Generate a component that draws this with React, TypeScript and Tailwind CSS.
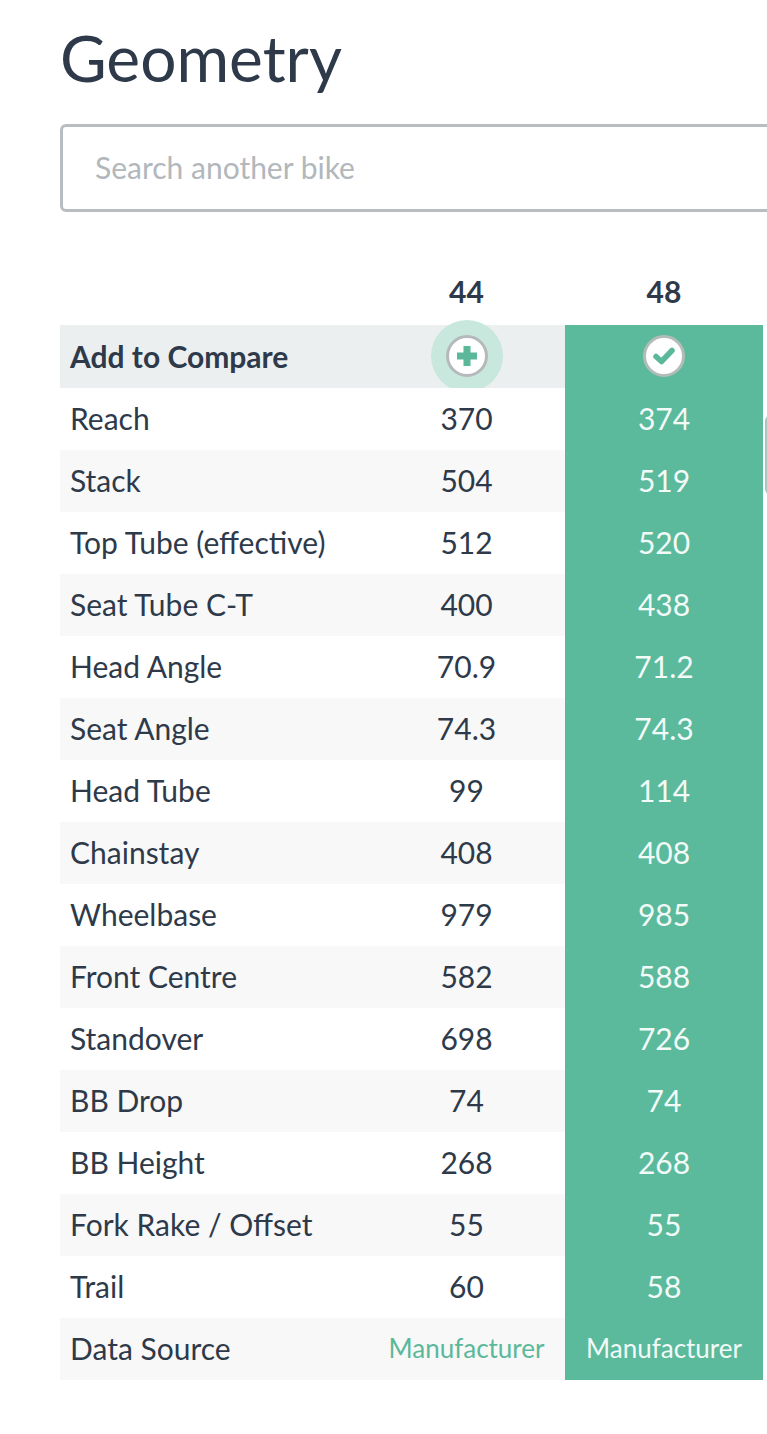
import React from "react";

const rows: [string, string, string][] = [
  ["Reach", "370", "374"],
  ["Stack", "504", "519"],
  ["Top Tube (effective)", "512", "520"],
  ["Seat Tube C-T", "400", "438"],
  ["Head Angle", "70.9", "71.2"],
  ["Seat Angle", "74.3", "74.3"],
  ["Head Tube", "99", "114"],
  ["Chainstay", "408", "408"],
  ["Wheelbase", "979", "985"],
  ["Front Centre", "582", "588"],
  ["Standover", "698", "726"],
  ["BB Drop", "74", "74"],
  ["BB Height", "268", "268"],
  ["Fork Rake / Offset", "55", "55"],
  ["Trail", "60", "58"],
];

function PlusButton() {
  return (
    <div className="flex h-[72px] w-[72px] items-center justify-center rounded-full bg-[#c8e7dd]">
      <div className="flex h-[42px] w-[42px] items-center justify-center rounded-full border-[3px] border-[#b6b9bb] bg-white">
        <svg width="24" height="24" viewBox="0 0 24 24">
          <path d="M12 2v20M2 12h20" stroke="#5bb89b" strokeWidth="7" />
        </svg>
      </div>
    </div>
  );
}

function CheckButton() {
  return (
    <div className="flex h-[42px] w-[42px] items-center justify-center rounded-full border-[3px] border-[#b4bcb8] bg-white">
      <svg width="24" height="24" viewBox="0 0 24 24">
        <path
          d="M4 12.5l5.5 5 10.5-11"
          fill="none"
          stroke="#5bb89b"
          strokeWidth="5.5"
          strokeLinecap="round"
          strokeLinejoin="round"
        />
      </svg>
    </div>
  );
}

export default function App() {
  return (
    <div
      className="relative min-h-[1434px] w-[767px] overflow-hidden bg-white text-[#2e3a4a]"
      style={{ fontFamily: "Lato, 'Noto Sans', sans-serif" }}
    >
      <div className="pl-[60px] pt-[20px]">
        {/* Title */}
        <h1 className="text-[64px] leading-[1.2] font-normal">Geometry</h1>

        {/* Search */}
        <div className="mt-[27px] flex h-[88px] w-[760px] items-center rounded-[6px] border-[3px] border-[#b8bdc1] pl-[32px]">
          <span className="text-[30px] text-[#b2b7bc]">Search another bike</span>
        </div>

        {/* Table */}
        <div className="mt-[61px] grid w-[703px] grid-cols-[308px_197px_198px]">
          <div />
          <div className="pb-[16px] text-center text-[30px] leading-[1.2] font-bold">44</div>
          <div className="pb-[16px] text-center text-[30px] leading-[1.2] font-bold">48</div>

          <div className="flex h-[63px] items-center bg-[#eceff0] pl-[10px] text-[30px] font-bold">
            Add to Compare
          </div>
          <div className="flex h-[63px] items-center justify-center overflow-visible bg-[#eceff0]">
            <PlusButton />
          </div>
          <div className="flex h-[63px] items-center justify-center bg-[#5bb99c]">
            <CheckButton />
          </div>

          {rows.map(([label, a, b], i) => {
            const bg = i % 2 === 0 ? "bg-white" : "bg-[#f8f8f8]";
            return (
              <React.Fragment key={label}>
                <div className={`flex h-[62px] items-center pl-[10px] text-[30px] ${bg}`}>{label}</div>
                <div className={`flex h-[62px] items-center justify-center text-[30px] ${bg}`}>{a}</div>
                <div className="flex h-[62px] items-center justify-center bg-[#5bb99c] text-[30px] text-[#f2fbf7]">
                  {b}
                </div>
              </React.Fragment>
            );
          })}

          <div className="flex h-[62px] items-center bg-[#f8f8f8] pl-[10px] text-[30px]">Data Source</div>
          <div className="flex h-[62px] items-center justify-center bg-[#f8f8f8] text-[26px] text-[#5bb89b]">
            Manufacturer
          </div>
          <div className="flex h-[62px] items-center justify-center bg-[#5bb99c] text-[26px] text-[#f2fbf7]">
            Manufacturer
          </div>
        </div>
      </div>

      {/* peeking edge of the next panel */}
      <div className="absolute left-[765px] top-[415px] h-[80px] w-[6px] rounded-l-md bg-[#a9c7bc]" />
    </div>
  );
}
